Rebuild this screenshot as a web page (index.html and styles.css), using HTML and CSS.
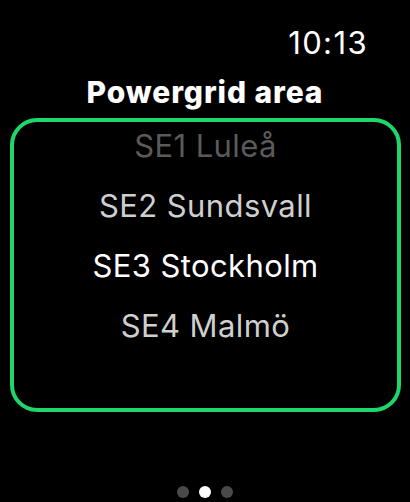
FILE: index.html
```html
<!DOCTYPE html>
<html>
<head>
<meta charset="utf-8">
<link rel="stylesheet" href="styles.css">
</head>
<body>
<div class="screen">
  <div class="status"><span class="time">10:13</span></div>
  <h1 class="title">Powergrid area</h1>
  <div class="picker">
    <div class="item item-far">SE1 Luleå</div>
    <div class="item item-near">SE2 Sundsvall</div>
    <div class="item item-selected">SE3 Stockholm</div>
    <div class="item item-near">SE4 Malmö</div>
  </div>
  <div class="dots">
    <span class="dot"></span>
    <span class="dot dot-active"></span>
    <span class="dot"></span>
  </div>
</div>
</body>
</html>
```
FILE: styles.css
```css
html, body {
  margin: 0;
  padding: 0;
  background: #000;
}
.screen {
  width: 410px;
  height: 502px;
  display: flex;
  flex-direction: column;
  font-family: Inter, "Liberation Sans", sans-serif;
  color: #fff;
  overflow: hidden;
}
.status {
  display: flex;
  justify-content: flex-end;
  padding: 23px 43px 0 0;
  height: 40px;
}
.time {
  font-size: 31px;
  line-height: 40px;
  font-weight: 400;
  letter-spacing: 1.4px;
  margin-right: -1px;
}
.title {
  margin: 0;
  text-align: center;
  font-size: 30px;
  font-weight: 800;
  letter-spacing: 0.9px;
  line-height: 59px;
  height: 55px;
}
.picker {
  margin: 0 9px 0 10px;
  height: 294px;
  box-sizing: border-box;
  border: 4px solid #1fd66d;
  border-radius: 27px;
  display: flex;
  flex-direction: column;
  align-items: center;
}
.item {
  font-size: 31px;
  letter-spacing: 0.4px;
  line-height: 48px;
  height: 60px;
}
.item-far { color: #5a5a5a; }
.item-near { color: #cfcfcf; }
.item-selected { color: #fff; }
.dots {
  margin-top: auto;
  display: flex;
  justify-content: center;
  gap: 10px;
  padding-bottom: 4px;
}
.dot {
  width: 12px;
  height: 12px;
  border-radius: 50%;
  background: #4a4a4a;
}
.dot-active { background: #fff; }
```
